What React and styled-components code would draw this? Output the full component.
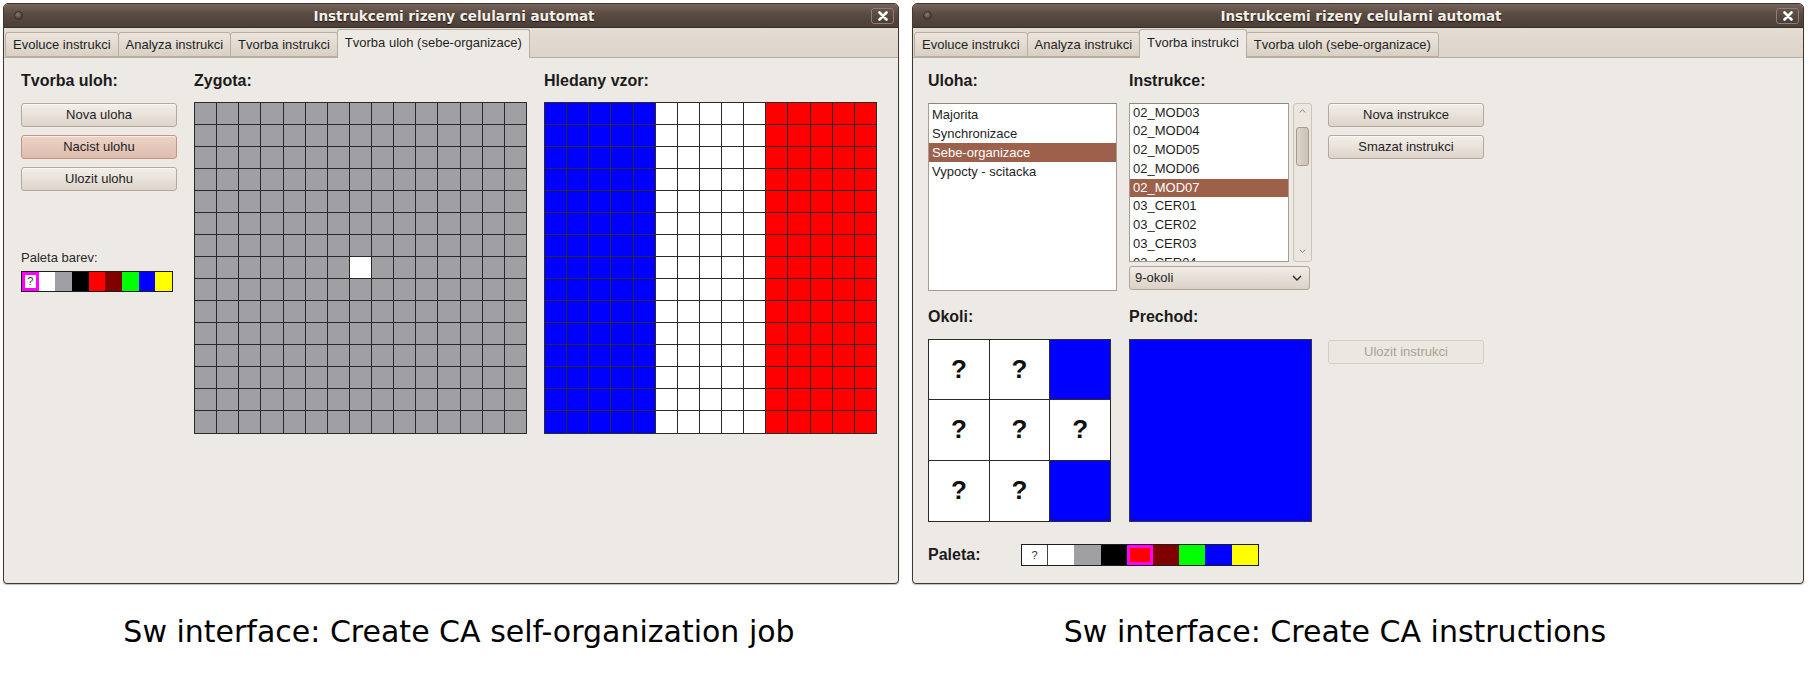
import React from 'react'
import styled, { createGlobalStyle } from 'styled-components'

const GlobalStyle = createGlobalStyle`
  html, body {
    margin: 0;
    padding: 0;
    background: #ffffff;
  }
  * {
    box-sizing: border-box;
  }
`

const UI = `"Liberation Sans", Arial, sans-serif`

const Page = styled.div`
  width: 1808px;
  height: 692px;
  padding: 3px 0 0 3px;
  display: flex;
  flex-direction: column;
  background: #ffffff;
  font-family: ${UI};
`

const Windows = styled.div`
  display: flex;
  gap: 13px;
`

const Window = styled.div`
  width: ${p => p.$w}px;
  height: 581px;
  display: flex;
  flex-direction: column;
  border: 1px solid #3f3832;
  border-radius: 5px 5px 4px 4px;
  overflow: hidden;
  background: #edeae5;
  box-shadow: 0 1px 1px rgba(0, 0, 0, 0.25);
`

const TitleBar = styled.div`
  height: 24px;
  flex: none;
  display: grid;
  grid-template-columns: 1fr auto 1fr;
  align-items: center;
  padding: 0 4px 0 10px;
  background: linear-gradient(#75645a, #5a4b42 45%, #4b3e36);
  border-bottom: 1px solid #3a302a;
`

const Title = styled.div`
  font-family: "DejaVu Sans", sans-serif;
  font-weight: bold;
  font-size: 13.5px;
  color: #f4efe8;
  text-shadow: 0 1px 1px #1b1410;
  white-space: nowrap;
`

const MenuDot = styled.div`
  width: 9px;
  height: 9px;
  border-radius: 50%;
  background: radial-gradient(circle at 40% 35%, #8a7d74, #4a3e37 70%);
  border: 1px solid #3a2f29;
`

const CloseButton = styled.div`
  justify-self: end;
  width: 23px;
  height: 16px;
  border-radius: 3px;
  border: 1px solid #8d7e73;
  background: linear-gradient(#64564d, #4a3e37);
  display: flex;
  align-items: center;
  justify-content: center;
`

const TabStrip = styled.div`
  height: 30px;
  flex: none;
  display: flex;
  align-items: flex-end;
  padding-left: 2px;
  background: linear-gradient(#e4ddd4, #dcd4ca);
  border-bottom: 1px solid #b9afa3;
`

const Tab = styled.div`
  height: ${p => (p.$active ? 29 : 25)}px;
  margin-bottom: ${p => (p.$active ? -1 : 0)}px;
  margin-left: -1px;
  padding: ${p => (p.$active ? '0 7px 3px' : '0 7px')};
  display: flex;
  align-items: center;
  font-size: 13px;
  color: #1f1f1f;
  white-space: nowrap;
  border: 1px solid #b7ada0;
  border-bottom: ${p => (p.$active ? 'none' : '1px solid #b7ada0')};
  border-radius: 3px 3px 0 0;
  background: ${p => (p.$active ? '#edeae5' : 'linear-gradient(#ebe5dd, #d9d0c5)')};
  position: relative;
  z-index: ${p => (p.$active ? 1 : 0)};
`

const Content = styled.div`
  flex: 1;
  display: flex;
  flex-direction: ${p => (p.$column ? 'column' : 'row')};
  padding: 14px 17px 14px ${p => p.$pl ?? 17}px;
  gap: ${p => (p.$column ? 0 : 17)}px;
`

const Column = styled.div`
  display: flex;
  flex-direction: column;
  width: ${p => p.$w}px;
`

const Heading = styled.div`
  height: 18px;
  line-height: 18px;
  font-size: 16px;
  font-weight: bold;
  color: #1b1b1b;
  margin-top: ${p => p.$mt ?? 0}px;
  margin-bottom: ${p => p.$mb ?? 12}px;
  width: ${p => (p.$w ? `${p.$w}px` : 'auto')};
  flex: none;
  white-space: nowrap;
`

const Button = styled.div`
  width: 156px;
  height: 24px;
  margin-top: ${p => p.$mt ?? 0}px;
  display: flex;
  align-items: center;
  justify-content: center;
  font-size: 13px;
  color: ${p => (p.$disabled ? '#aaa298' : '#1e1e1e')};
  border-radius: 3px;
  border: 1px solid ${p => (p.$hot ? '#c99483' : p.$disabled ? '#d5cdc3' : '#b4a99c')};
  background: ${p =>
    p.$hot
      ? 'linear-gradient(#ecd3c8, #dfbdae)'
      : p.$disabled
      ? '#ebe7e1'
      : 'linear-gradient(#f3efea, #ddd4ca)'};
  box-shadow: ${p => (p.$disabled ? 'none' : 'inset 0 1px 0 rgba(255,255,255,.6)')};
`

const Label = styled.div`
  font-size: 13px;
  line-height: 15px;
  color: #2b2b2b;
  margin-top: ${p => p.$mt ?? 0}px;
`

const CellGrid = styled.div`
  display: grid;
  grid-template-columns: repeat(${p => p.$cols}, 1fr);
  grid-template-rows: repeat(${p => p.$rows}, 1fr);
  gap: 1px;
  padding: 1px;
  width: ${p => p.$w}px;
  height: ${p => p.$h}px;
  background: #2a2a2a;
`

const Cell = styled.div`
  background: ${p => p.$c};
  display: flex;
  align-items: center;
  justify-content: center;
  font-size: 26px;
  font-weight: bold;
  color: #111;
`

const Strip = styled.div`
  display: flex;
  border: 1px solid #1d1d1d;
  margin-top: ${p => p.$mt ?? 0}px;
  align-self: flex-start;
`

const Swatch = styled.div`
  width: ${p => p.$w}px;
  height: ${p => p.$h}px;
  background: ${p => p.$c};
  border: ${p => (p.$sel ? '3px solid #ff00ff' : 'none')};
  border-right: ${p => (p.$sel ? '3px solid #ff00ff' : p.$q ? '1px solid #444' : 'none')};
  display: flex;
  align-items: center;
  justify-content: center;
  font-size: 11px;
  color: #333;
`

// right window
const FormGrid = styled.div`
  display: grid;
  grid-template-columns: 189px 183px 160px;
  grid-template-rows: 18px 188px 23px 183px;
  column-gap: 12px;
  row-gap: 12.5px;
  align-items: start;
`

const Stack = styled.div`
  display: flex;
  flex-direction: column;
  gap: ${p => p.$gap ?? 0}px;
  padding-left: ${p => p.$pl ?? 0}px;
`

const ListBox = styled.div`
  width: ${p => p.$w}px;
  height: ${p => p.$h}px;
  background: #ffffff;
  border: 1px solid #a69d92;
  border-top-color: #8f867b;
  overflow: hidden;
  padding-top: ${p => p.$pt ?? 1}px;
`

const ListItem = styled.div`
  height: ${p => p.$h ?? 19}px;
  line-height: ${p => (p.$h ? 17 : 19)}px;
  padding-left: 3px;
  font-size: 13px;
  color: ${p => (p.$sel ? '#ffffff' : '#1e1e1e')};
  background: ${p => (p.$sel ? '#9d604a' : 'transparent')};
  white-space: nowrap;
`

const ListRow = styled.div`
  display: flex;
  gap: 4px;
`

const ScrollTrack = styled.div`
  width: 19px;
  height: 159px;
  border: 1px solid #cdc4b8;
  border-radius: 3px;
  background: #ebe6df;
  display: flex;
  flex-direction: column;
  align-items: center;
  padding: 5px 0 7px;
`

const Thumb = styled.div`
  width: 13px;
  height: 39px;
  margin-top: 14px;
  border-radius: 3px;
  border: 1px solid #a59b8f;
  background: linear-gradient(90deg, #ddd5cb, #cbc1b5);
`

const ScrollSpacer = styled.div`
  flex: 1;
`

const Combo = styled.div`
  width: 181px;
  height: 24px;
  margin-top: 4px;
  display: flex;
  align-items: center;
  justify-content: space-between;
  padding: 0 7px 0 5px;
  font-size: 13px;
  color: #1e1e1e;
  border-radius: 3px;
  border: 1px solid #b0a598;
  background: linear-gradient(#f1ece6, #dbd2c7);
`

const Box = styled.div`
  width: 183px;
  height: 183px;
  background: ${p => p.$c};
  border: 1px solid #333;
`

const PaletteRow = styled.div`
  display: flex;
  align-items: center;
  margin-top: 22px;
`

const Captions = styled.div`
  display: flex;
  margin-top: 33px;
  margin-left: -3px;
`

const Caption = styled.div`
  width: ${p => p.$w}px;
  text-align: center;
  font-family: "DejaVu Sans", sans-serif;
  font-size: 30px;
  line-height: 30px;
  color: #000;
  white-space: nowrap;
`

const Chevron = ({ up, size = 7, color = '#8a8177' }) => (
  <svg width={size} height={size * 0.6} viewBox="0 0 10 6">
    <polyline
      points={up ? '1,5 5,1 9,5' : '1,1 5,5 9,1'}
      fill="none"
      stroke={color}
      strokeWidth="1.4"
    />
  </svg>
)

const CloseIcon = () => (
  <svg width="10" height="10" viewBox="0 0 10 10">
    <path d="M1.5 1.5 L8.5 8.5 M8.5 1.5 L1.5 8.5" stroke="#ffffff" strokeWidth="2.6" strokeLinecap="round" />
  </svg>
)

const PALETTE = ['#ffffff', '#ffffff', '#a0a0a4', '#000000', '#ff0000', '#800000', '#00ff00', '#0000ff', '#ffff00']
const TABS = ['Evoluce instrukci', 'Analyza instrukci', 'Tvorba instrukci', 'Tvorba uloh (sebe-organizace)']

function Frame({ w, active, children }) {
  return (
    <Window $w={w}>
      <TitleBar>
        <MenuDot />
        <Title>Instrukcemi rizeny celularni automat</Title>
        <CloseButton>
          <CloseIcon />
        </CloseButton>
      </TitleBar>
      <TabStrip>
        {TABS.map((t, i) => (
          <Tab key={t} $active={i === active}>{t}</Tab>
        ))}
      </TabStrip>
      {children}
    </Window>
  )
}

function Palette({ w, h, selected }) {
  return (
    <Strip>
      {PALETTE.map((c, i) => (
        <Swatch key={i} $w={w} $h={h} $c={c} $sel={i === selected} $q={i === 0}>
          {i === 0 ? '?' : null}
        </Swatch>
      ))}
    </Strip>
  )
}

function JobPanel() {
  const zygota = []
  const vzor = []
  for (let r = 0; r < 15; r++) {
    for (let c = 0; c < 15; c++) {
      zygota.push(r === 7 && c === 7 ? '#ffffff' : '#a0a0a4')
      vzor.push(c < 5 ? '#0000ff' : c < 10 ? '#ffffff' : '#ff0000')
    }
  }
  return (
    <Content>
      <Column $w={156}>
        <Heading $mb={12.5}>Tvorba uloh:</Heading>
        <Button>Nova uloha</Button>
        <Button $mt={8} $hot>Nacist ulohu</Button>
        <Button $mt={8}>Ulozit ulohu</Button>
        <Label $mt={59.5}>Paleta barev:</Label>
        <Strip $mt={5.5}>
          {PALETTE.map((c, i) => (
            <Swatch key={i} $w={16.67} $h={19} $c={c} $sel={i === 0} $q={i === 0}>
              {i === 0 ? '?' : null}
            </Swatch>
          ))}
        </Strip>
      </Column>
      <Column $w={333}>
        <Heading $mb={11.5}>Zygota:</Heading>
        <CellGrid $cols={15} $rows={15} $w={333} $h={332}>
          {zygota.map((c, i) => (
            <Cell key={i} $c={c} />
          ))}
        </CellGrid>
      </Column>
      <Column $w={333}>
        <Heading $mb={11.5}>Hledany vzor:</Heading>
        <CellGrid $cols={15} $rows={15} $w={333} $h={332}>
          {vzor.map((c, i) => (
            <Cell key={i} $c={c} />
          ))}
        </CellGrid>
      </Column>
    </Content>
  )
}

function InstructionPanel() {
  const ulohy = ['Majorita', 'Synchronizace', 'Sebe-organizace', 'Vypocty - scitacka']
  const instrukce = ['02_MOD03', '02_MOD04', '02_MOD05', '02_MOD06', '02_MOD07', '03_CER01', '03_CER02', '03_CER03', '03_CER04']
  const okoli = ['?', '?', 'B', '?', '?', '?', '?', '?', 'B']
  return (
    <Content $column $pl={15}>
      <FormGrid>
        <Heading $mb={0}>Uloha:</Heading>
        <Heading $mb={0}>Instrukce:</Heading>
        <div />
        <ListBox $w={189} $h={188}>
          {ulohy.map((u, i) => (
            <ListItem key={u} $sel={i === 2}>{u}</ListItem>
          ))}
        </ListBox>
        <div>
          <ListRow>
            <ListBox $w={160} $h={159} $pt={0}>
              {instrukce.map((u, i) => (
                <ListItem key={u} $h={18.8} $sel={i === 4}>{u}</ListItem>
              ))}
            </ListBox>
            <ScrollTrack>
              <Chevron up />
              <Thumb />
              <ScrollSpacer />
              <Chevron />
            </ScrollTrack>
          </ListRow>
          <Combo>
            9-okoli
            <Chevron size={10} color="#2a2a2a" />
          </Combo>
        </div>
        <Stack $gap={8} $pl={4}>
          <Button>Nova instrukce</Button>
          <Button>Smazat instrukci</Button>
        </Stack>
        <Heading $mb={0} $mt={5}>Okoli:</Heading>
        <Heading $mb={0} $mt={5}>Prechod:</Heading>
        <div />
        <CellGrid $cols={3} $rows={3} $w={183} $h={183}>
          {okoli.map((c, i) => (
            <Cell key={i} $c={c === 'B' ? '#0000ff' : '#ffffff'}>{c === 'B' ? null : '?'}</Cell>
          ))}
        </CellGrid>
        <Box $c="#0000ff" />
        <Stack $pl={4}>
          <Button $disabled $mt={1}>Ulozit instrukci</Button>
        </Stack>
      </FormGrid>
      <PaletteRow>
        <Heading $mb={0} $w={93}>Paleta:</Heading>
        <Palette w={26.2} h={20} selected={4} />
      </PaletteRow>
    </Content>
  )
}

export default function App() {
  return (
    <Page>
      <GlobalStyle />
      <Windows>
        <Frame w={896} active={3}>
          <JobPanel />
        </Frame>
        <Frame w={892} active={2}>
          <InstructionPanel />
        </Frame>
      </Windows>
      <Captions>
        <Caption $w={918}>Sw interface: Create CA self-organization job</Caption>
        <Caption $w={834}>Sw interface: Create CA instructions</Caption>
      </Captions>
    </Page>
  )
}
